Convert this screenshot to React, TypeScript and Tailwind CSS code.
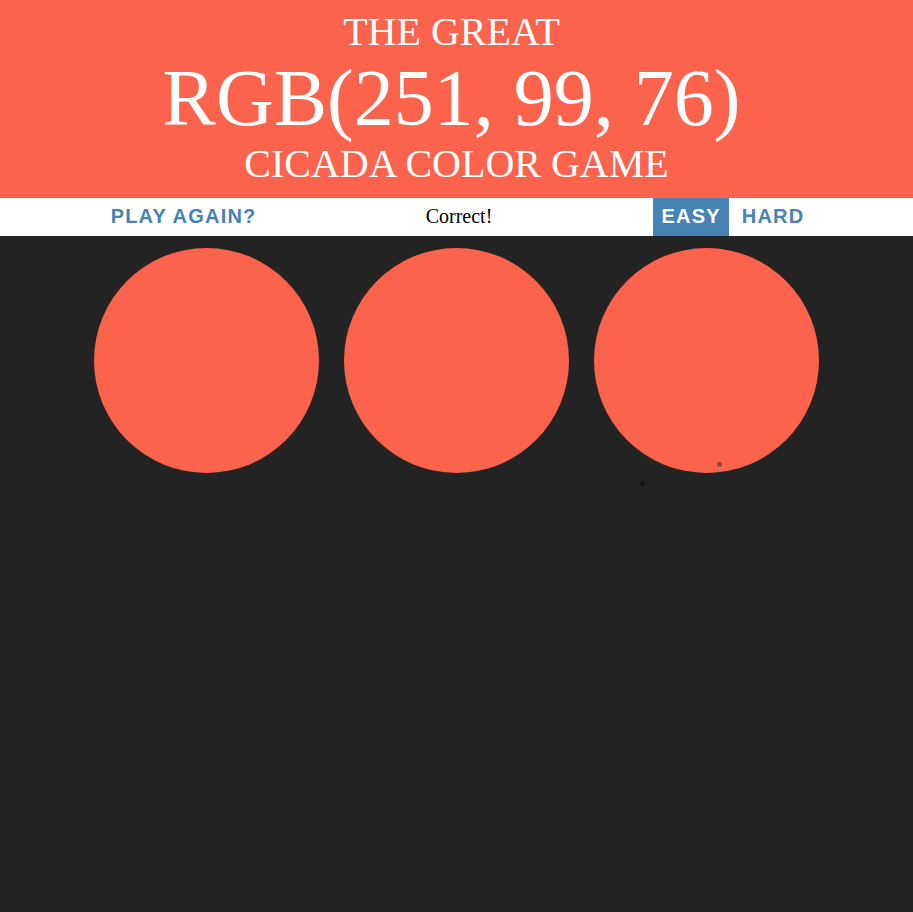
import React from 'react';

const color = 'rgb(251, 99, 76)';
const squares = [color, color, color];

const App: React.FC = () => {
  return (
    <div className="min-h-[912px] bg-[#232323] font-['Liberation_Serif',serif] text-[20px]">
      {/* header */}
      <h1 className="bg-[#fb634c] pt-[10px] pb-[12px] text-center font-normal uppercase leading-[1.1] text-white">
        <span className="block pr-[10px] text-[40px]">The Great</span>
        <span className="block pr-[10px] text-[80px]">RGB(251, 99, 76)</span>
        <span className="block text-[40px]">Cicada Color Game</span>
      </h1>

      {/* stripe */}
      <div className="flex h-[38px] items-stretch justify-center gap-[5px] bg-white pl-[2px]">
        <button className="px-2 pb-[2px] font-['Liberation_Sans',sans-serif] text-[20px] font-bold uppercase tracking-[1.2px] text-[#4682b4]">
          Play Again?
        </button>
        <span className="flex w-[379px] items-center justify-center pb-[2px] text-black">Correct!</span>
        <button className="bg-[#4682b4] px-2 pb-[2px] font-['Liberation_Sans',sans-serif] text-[20px] font-bold uppercase tracking-[1.2px] text-white">
          Easy
        </button>
        <button className="px-2 pb-[2px] font-['Liberation_Sans',sans-serif] text-[20px] font-bold uppercase tracking-[1.2px] text-[#4682b4]">
          Hard
        </button>
      </div>

      {/* squares */}
      <div className="relative mx-auto flex w-[750px] pt-[12px]">
        {squares.map((c, i) => (
          <div
            key={i}
            className="mx-[12.5px] h-[225px] w-[225px] rounded-full"
            style={{ background: c }}
          />
        ))}
        <span className="absolute left-[635px] top-[226px] h-[5px] w-[5px] rounded-full bg-[#8d4a40] blur-[0.5px]" />
        <span className="absolute left-[558px] top-[245px] h-[5px] w-[5px] rounded-full bg-[#141414] blur-[0.5px]" />
      </div>
    </div>
  );
};

export default App;
